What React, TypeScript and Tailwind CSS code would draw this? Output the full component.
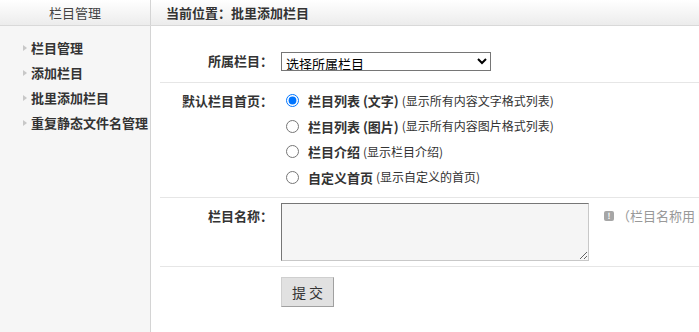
import React from "react";

const FONT = { fontFamily: '"Microsoft YaHei", "Noto Sans CJK SC", "Noto Sans", sans-serif' };

const MENU = ["栏目管理", "添加栏目", "批里添加栏目", "重复静态文件名管理"];

const HOME_OPTIONS = [
  { title: "栏目列表 (文字)", note: "(显示所有内容文字格式列表)", checked: true },
  { title: "栏目列表 (图片)", note: "(显示所有内容图片格式列表)", checked: false },
  { title: "栏目介绍", note: "(显示栏目介绍)", checked: false },
  { title: "自定义首页", note: "(显示自定义的首页)", checked: false },
];

const Label = ({ children }: { children: React.ReactNode }) => (
  <div className="w-[121px] shrink-0 pr-[8px] text-right text-[13px] font-bold text-[#333]">{children}</div>
);

export default function App() {
  return (
    <div className="flex h-[332px] w-[699px] flex-col overflow-hidden bg-white text-[#333]" style={FONT}>
      {/* top bar */}
      <div className="flex h-[26px] shrink-0 border-b border-[#d9d9d9] bg-gradient-to-b from-white to-[#ececec]">
        <div className="flex w-[151px] shrink-0 items-center justify-center border-r border-[#d4d4d4] text-[13px] text-[#444]">
          栏目管理
        </div>
        <div className="flex items-center pl-[15px] text-[13px] font-bold text-[#333]">当前位置：批里添加栏目</div>
      </div>

      <div className="flex flex-1">
        {/* sidebar */}
        <div className="w-[151px] shrink-0 border-r border-[#d4d4d4] bg-[#f6f6f6] pt-[9px]">
          {MENU.map((m) => (
            <div key={m} className="flex h-[25px] items-center pl-[23px] text-[13px] font-bold text-[#333]">
              <span className="mr-[4px] h-0 w-0 border-y-[3px] border-l-[4px] border-y-transparent border-l-[#c8c8c8]" />
              {m}
            </div>
          ))}
        </div>

        {/* content */}
        <div className="flex-1 overflow-hidden pl-[9px] pt-[16px]">
          <div className="flex h-[41px] items-center border-b border-[#e6e6e6] pb-[2px]">
            <Label>所属栏目：</Label>
            <select className="h-[19px] w-[210px] border border-[#767676] bg-white pl-0 text-[13px] text-black">
              <option>选择所属栏目</option>
            </select>
          </div>

          <div className="flex h-[115px] items-start border-b border-[#e6e6e6] pt-[5px]">
            <div className="flex h-[25px] items-center">
              <Label>默认栏目首页：</Label>
            </div>
            <div className="flex flex-col">
              {HOME_OPTIONS.map((o) => (
                <label key={o.title} className="flex h-[25.5px] items-center whitespace-nowrap text-[13px]">
                  <input type="radio" name="home" defaultChecked={o.checked} className="ml-[5px] mr-[9px] h-[13px] w-[13px]" />
                  <span className="mr-[3px] font-bold text-[#333]">{o.title}</span>
                  <span className="text-[12px] text-[#333]">{o.note}</span>
                </label>
              ))}
            </div>
          </div>

          <div className="flex h-[69px] items-start border-b border-[#e6e6e6] pt-[5px]">
            <div className="flex h-[25px] items-center">
              <Label>栏目名称：</Label>
            </div>
            <textarea className="h-[58px] w-[308px] shrink-0 resize border border-b-[#c8c8c8] border-l-[#767676] border-r-[#c8c8c8] border-t-[#767676] bg-[#f5f5f5]" />
            <div className="ml-[15px] flex h-[25px] items-center whitespace-nowrap text-[13px] text-[#999]">
              <span className="mr-[3px] flex h-[10px] w-[10px] items-center justify-center rounded-[2px] bg-[#a6a6a6] text-[8px] font-bold leading-none text-white">
                !
              </span>
              （栏目名称用 |隔开）
            </div>
          </div>

          <div className="flex pt-[10px]">
            <div className="w-[121px] shrink-0" />
            <button className="h-[30px] w-[53px] border border-b-[#a0a0a0] border-l-[#cfcfcf] border-r-[#a0a0a0] border-t-[#cfcfcf] bg-[#e1e1e1] text-[14px] text-[#333]">
              提 交
            </button>
          </div>
        </div>
      </div>
    </div>
  );
}
